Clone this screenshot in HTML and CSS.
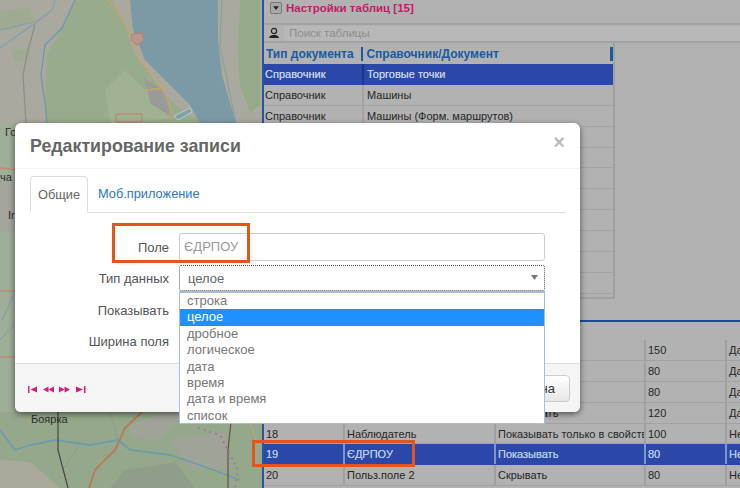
FILE: index.html
```html
<!DOCTYPE html>
<html lang="ru">
<head>
<meta charset="utf-8">
<title>Редактирование записи</title>
<link rel="stylesheet" href="styles.css">
</head>
<body>
<div class="desktop">
  <div class="map">
    <svg class="map-svg" viewBox="0 0 262 488" preserveAspectRatio="none">
      <rect width="262" height="488" fill="#a9a99f"/>
      <!-- north: forest, reservoir, east bank -->
      <path d="M45 123L47 55L70 12L76 0H112L125 25L135 55L150 75L170 100L190 116L204 123Z" fill="#98ab8c"/>
      <path d="M105 90L125 70L150 95L175 118L130 123H110Z" fill="#a0b292"/>
      <path d="M0 10L30 8L34 22L8 30L0 30ZM12 50L30 48L30 60L14 62Z" fill="#9eab92"/>
      <path d="M130 0H218V40L222 75L232 110L236 123H200L190 105L165 80L145 60L133 30Z" fill="#7b9aa6"/>
      <path d="M240 0H260V105L250 112L240 85L238 50Z" fill="#96aa8a"/>
      <path d="M144 78L165 92L168 106L150 100ZM148 92L170 108L172 118L150 103Z" fill="#9a9a98"/>
      <path d="M174 116L190 108L192 112L178 120Z" fill="#80a0aa" stroke="#c8c8c0"/>
      <path d="M222 0L220 45L228 85L236 123" fill="none" stroke="#8aa098" stroke-width="1.200"/>
      <path d="M108 0L122 18L132 40L140 60L160 85L170 105L170 123M146 90L165 88" fill="none" stroke="#c8a468" stroke-width="1.300"/>
      <path d="M132 34L142 33L144 40L137 45L131 40Z" fill="#b4998c" stroke="#c47a68"/>
      <path d="M116 114H142V122H116Z" fill="none" stroke="#c47a68"/>
      <path d="M0 48L34 24L52 10L55 0M0 30L34 22" fill="none" stroke="#7fa0b2" stroke-width="1.200"/>
      <path d="M75 0L62 28L45 45L41 75L46 110L47 123" fill="none" stroke="#6f96b2" stroke-width="1.300"/>
      <path d="M35 25L28 50L23 75L26 123" fill="none" stroke="#8c8c88" stroke-width="1.200"/>
      <!-- west strip -->
      <path d="M0 123H20V412H0Z" fill="#9fae98"/>
      <path d="M0 168L18 170M0 291L18 291M0 357L18 357" stroke="#c08a6c" stroke-width="1.300"/>
      <path d="M0 180H18V232H0Z" fill="#a5a59e"/>
      <path d="M2 320L14 295M0 340L14 325" fill="none" stroke="#7d9bab"/>
      <!-- south: river, roads -->
      <path d="M0 412H262V488H0Z" fill="#96a88c"/>
      <path d="M0 460L30 462L60 488H0Z" fill="#aba99c"/>
      <path d="M130 425L165 412H185L160 440L130 438ZM170 440L225 432L232 470L190 468Z" fill="#a0a398"/>
      <path d="M125 470L175 462L195 488H110Z" fill="#8f9e8a"/>
      <path d="M0 430L15 450L30 445L55 440L90 445L118 440L130 450L170 455L200 465L240 480" fill="none" stroke="#6f9cab" stroke-width="1.800"/>
      <path d="M110 412L118 440M80 445L62 470" fill="none" stroke="#8c9c90"/>
      <path d="M58 412V450L68 488" fill="none" stroke="#444" stroke-width="1.200"/>
      <path d="M142 412L125 428L115 450L95 470L89 488" fill="none" stroke="#b8785c" stroke-width="1.800"/>
      <path d="M232 412L228 450V488" fill="none" stroke="#6a5044" stroke-width="1.200"/>
      <path d="M198 428L220 435L238 470L235 488" fill="none" stroke="#a07a9a" stroke-width="2" stroke-dasharray="2 4"/>
      <path d="M246 412L256 440" fill="none" stroke="#c8a468"/>
      <text x="31" y="423" class="map-label">Боярка</text>
      <text x="5" y="136" class="map-label">Го</text>
      <text x="0" y="181" class="map-label">ча</text>
      <text x="8" y="219" class="map-label">Ir</text>
    </svg>
  </div>
  <div class="panel">
    <section class="top">
      <div class="title-bar">
        <span class="toggle"><svg viewBox="0 0 12 12" width="10" height="10"><path d="M2.500 4H9.500L6 8.500Z" fill="#222"/></svg></span>
        <span class="title">Настройки таблиц [15]</span>
      </div>
      <div class="search-bar">
        <svg class="user-icon" viewBox="0 0 12 12" width="12" height="12"><circle cx="6" cy="4" r="2.600" fill="none" stroke="#222" stroke-width="1.200"/><path d="M1 11C1.500 8.500 4 8 6 8S10.500 8.500 11 11Z" fill="#222"/></svg>
        <span class="search-input">Поиск таблицы</span>
      </div>
      <div class="top-body">
        <div class="top-table">
          <div class="head-row">
            <span class="head-a">Тип документа</span>
            <span class="head-b">Справочник/Документ</span>
          </div>
          <div class="doc-row sel"><span class="doc-a">Справочник</span><span class="doc-b">Торговые точки</span></div>
          <div class="doc-row"><span class="doc-a">Справочник</span><span class="doc-b">Машины</span></div>
          <div class="doc-row"><span class="doc-a">Справочник</span><span class="doc-b">Машины (Форм. маршрутов)</span></div>
          <div class="doc-row"><span class="doc-a"></span><span class="doc-b"></span></div>
          <div class="doc-row"><span class="doc-a"></span><span class="doc-b"></span></div>
          <div class="doc-row"><span class="doc-a"></span><span class="doc-b"></span></div>
          <div class="doc-row"><span class="doc-a"></span><span class="doc-b"></span></div>
          <div class="doc-row"><span class="doc-a"></span><span class="doc-b"></span></div>
          <div class="doc-row"><span class="doc-a"></span><span class="doc-b"></span></div>
          <div class="doc-row"><span class="doc-a"></span><span class="doc-b"></span></div>
          <div class="doc-row"><span class="doc-a"></span><span class="doc-b"></span></div>
        </div>
      </div>
    </section>
    <section class="bottom">
      <div class="f-row"><span class="c1"></span><span class="c2"></span><span class="c3"></span><span class="c4">150</span><span class="c5">Да</span></div>
      <div class="f-row"><span class="c1"></span><span class="c2"></span><span class="c3"></span><span class="c4">80</span><span class="c5">Да</span></div>
      <div class="f-row"><span class="c1"></span><span class="c2"></span><span class="c3"></span><span class="c4">80</span><span class="c5">Да</span></div>
      <div class="f-row"><span class="c1"></span><span class="c2"></span><span class="c3">Показывать</span><span class="c4">120</span><span class="c5">Да</span></div>
      <div class="f-row"><span class="c1">18</span><span class="c2">Наблюдатель</span><span class="c3">Показывать только в свойствах</span><span class="c4">100</span><span class="c5">Нет</span></div>
      <div class="f-row sel"><span class="c1">19</span><span class="c2">ЄДРПОУ</span><span class="c3">Показывать</span><span class="c4">80</span><span class="c5">Нет</span></div>
      <div class="f-row"><span class="c1">20</span><span class="c2">Польз.поле 2</span><span class="c3">Скрывать</span><span class="c4">80</span><span class="c5">Нет</span></div>
    </section>
  </div>

  <div class="modal">
    <header class="modal-head">
      <h1 class="modal-title">Редактирование записи</h1>
      <span class="close">×</span>
    </header>
    <div class="modal-body">
      <nav class="tabs">
        <span class="tab active">Общие</span>
        <span class="tab">Моб.приложение</span>
      </nav>
      <div class="form">
        <div class="form-row first"><label class="lbl">Поле</label><div class="input">ЄДРПОУ</div></div>
        <div class="form-row second"><label class="lbl">Тип данных</label>
          <div class="select"><span>целое</span><svg class="caret" viewBox="0 0 7 5" width="7" height="5"><path d="M0 0H7L3.500 5Z" fill="#777"/></svg></div>
        </div>
        <div class="form-row third"><label class="lbl">Показывать</label></div>
        <div class="form-row"><label class="lbl">Ширина поля</label></div>
      </div>
    </div>
    <footer class="modal-foot">
      <div class="pager">
        <svg viewBox="0 0 60 7" width="60" height="7"><path d="M0 0H1.500V7H0ZM2.500 3.500L9 .5V6.500Z M15 3.500L20.500 .5V6.500ZM20.500 3.500L26 .5V6.500Z M31 .5L36.500 3.500L31 6.500ZM36.500 .5L42 3.500L36.500 6.500Z M48 .5L55 3.500L48 6.500ZM56 0H57.500V7H56Z" fill="#d4207c"/></svg>
      </div>
      <button class="btn">Отмена</button>
    </footer>
  </div>

  <ul class="dropdown">
    <li>строка</li>
    <li class="on">целое</li>
    <li>дробное</li>
    <li>логическое</li>
    <li>дата</li>
    <li>время</li>
    <li>дата и время</li>
    <li>список</li>
  </ul>

  <div class="mark mark-field"></div>
  <div class="mark mark-row"></div>
</div>
</body>
</html>
```
FILE: styles.css
```css
* { box-sizing: border-box; }
html, body { margin: 0; padding: 0; }
body { font-family: "Liberation Sans", Arial, sans-serif; color: #333; overflow: hidden; }
.desktop { position: relative; width: 740px; height: 488px; display: flex; overflow: hidden; background: #b2b2b2; }

.map { width: 262px; height: 488px; flex: none; }
.map-svg { display: block; width: 262px; height: 488px; }
.map-label { font: 11px "Liberation Sans", Arial, sans-serif; fill: #2c2c2c; }

.panel { flex: 1; min-width: 0; display: flex; flex-direction: column; border-left: 2px solid #1a5aa8; background: #b2b2b2; }
.top { height: 322px; flex: none; display: flex; flex-direction: column; border-bottom: 2px solid #1c4a9c; }
.title-bar { height: 25px; padding: 0 0 8px 6px; display: flex; align-items: center; gap: 4px; border-bottom: 2px solid #a2a2a2; }
.toggle { width: 12px; height: 12px; border: 1px solid #777; border-radius: 2px; background: #a8a8a8; display: flex; align-items: center; justify-content: center; }
.title { font-size: 11.500px; font-weight: bold; color: #c01c68; }
.search-bar { height: 18px; display: flex; align-items: center; padding-left: 4px; gap: 4px; border-bottom: 2px solid #a2a2a2; }
.user-icon { flex: none; }
.search-input { flex: 1; height: 15px; padding-left: 5px; font-size: 11.500px; line-height: 15px; color: #8e8e8e; background: #b8b8b8; }
.top-body { flex: 1; min-height: 0; overflow: hidden; }
.top-table { width: 351px; height: 256px; border-right: 2px solid #a0a0a0; border-bottom: 2px solid #a0a0a0; overflow: hidden; }
.head-row { height: 21px; display: flex; align-items: center; font-size: 12px; font-weight: bold; color: #1a5aa0; }
.head-a { width: 100px; padding-left: 2px; border-right: 2px solid #1a5aa0; line-height: 14px; white-space: nowrap; }
.head-b { width: 251px; padding-left: 3px; border-right: 3px solid #1a5aa0; line-height: 14px; white-space: nowrap; }
.doc-row { height: 20.900px; display: flex; align-items: center; font-size: 11px; border-bottom: 1px solid #a2a2a2; color: #262626; }
.doc-a { width: 100px; height: 100%; padding-left: 1px; line-height: 20px; border-right: 2px solid #a2a2a2; flex: none; }
.doc-b { flex: 1; padding-left: 3px; white-space: nowrap; }
.doc-row.sel { background: #2b48a8; color: #c2d0ec; text-shadow: 0 0 .6px #c2d0ec; border-bottom-color: #2b48a8; }
.doc-row.sel .doc-a { border-right-color: #1e3488; }

.bottom { flex: 1; min-height: 0; padding-top: 18px; overflow: hidden; }
.f-row { height: 20.900px; display: flex; align-items: center; font-size: 11px; border-bottom: 1px solid #a2a2a2; color: #262626; white-space: nowrap; }
.f-row span { height: 100%; line-height: 20px; overflow: hidden; border-right: 2px solid #a0a0a0; padding-left: 2px; flex: none; }
.c1 { width: 81px; }
.c2 { width: 151px; }
.c3 { width: 150px; }
.c4 { width: 81px; }
.f-row .c5 { width: 20px; border-right: 0; }
.f-row.sel { background: #2b48a8; color: #b6c8ec; text-shadow: 0 0 .6px #b6c8ec; border-bottom-color: #2b48a8; }
.f-row.sel span { border-right-color: #7f95d0; }

.modal { position: absolute; left: 15px; top: 123px; width: 565px; height: 289px; background: #fff; border-radius: 6px; box-shadow: 0 2px 6px rgba(0, 0, 0, .55); display: flex; flex-direction: column; overflow: hidden; }
.modal-head { height: 46px; flex: none; border-bottom: 1px solid #f4f4f4; padding: 2px 15px 0; display: flex; align-items: center; justify-content: space-between; }
.modal-title { margin: 0; font-size: 17.800px; font-weight: bold; color: #666; }
.close { font-size: 20px; font-weight: bold; color: #bbb; margin: -10px 0 0; line-height: 20px; }
.modal-body { flex: 1; min-height: 0; padding: 7px 15px 0; }
.tabs { display: flex; height: 37px; border-bottom: 1px solid #ddd; width: 536px; font-size: 12.800px; }
.tab { padding: 0 10px; line-height: 36px; color: #2a78c0; }
.tab.active { color: #666; background: #fff; border: 1px solid #ddd; border-bottom-color: #fff; border-radius: 4px 4px 0 0; height: 37px; padding: 0 7px; width: 58px; }
.form { padding-top: 20px; }
.form-row { display: flex; height: 31px; align-items: center; }
.form-row.first { height: 28px; margin-bottom: 4px; }
.form-row.second { height: 26px; margin-bottom: 4px; }
.form-row.third { height: 31px; }
.lbl { width: 139px; text-align: right; font-size: 13px; color: #555; flex: none; }
.first .lbl { padding-top: 1px; }
.input { margin-left: 10px; width: 366px; height: 28px; border: 1px solid #ccc; border-radius: 3px; padding-left: 4px; line-height: 26px; font-size: 13px; color: #999; flex: none; }
.select { margin-left: 10px; width: 366px; height: 26px; border: 1px dotted #555; border-radius: 2px; padding: 0 6px 0 8px; display: flex; align-items: center; justify-content: space-between; font-size: 13px; color: #666; }
.caret { margin-top: -2px; }
.modal-foot { height: 49px; flex: none; border-top: 1px solid #ddd; background: #f5f5f5; display: flex; align-items: center; justify-content: space-between; padding: 0 10px 0 13px; }
.pager { display: flex; align-items: center; padding-top: 3px; }
.pager svg { display: block; }
.btn { width: 82px; height: 27px; border: 1px solid #ccc; border-radius: 4px; background: linear-gradient(#fff, #e6e6e6); font: 13px "Liberation Sans", Arial, sans-serif; color: #333; text-align: right; padding-right: 14px; }

.dropdown { position: absolute; left: 179px; top: 291px; width: 366px; height: 133px; margin: 0; padding: 0; list-style: none; background: #fff; border: 1px solid #a8bcdc; border-top-width: 2px; font-size: 13px; color: #777; }
.dropdown li { height: 16.400px; line-height: 16.400px; padding-left: 7px; }
.dropdown li.on { background: #1e90ff; color: #fff; }

.mark { position: absolute; border: 3px solid #e2561c; }
.mark-field { left: 112px; top: 223px; width: 138px; height: 40px; }
.mark-row { left: 252px; top: 440px; width: 163px; height: 27px; }
```
